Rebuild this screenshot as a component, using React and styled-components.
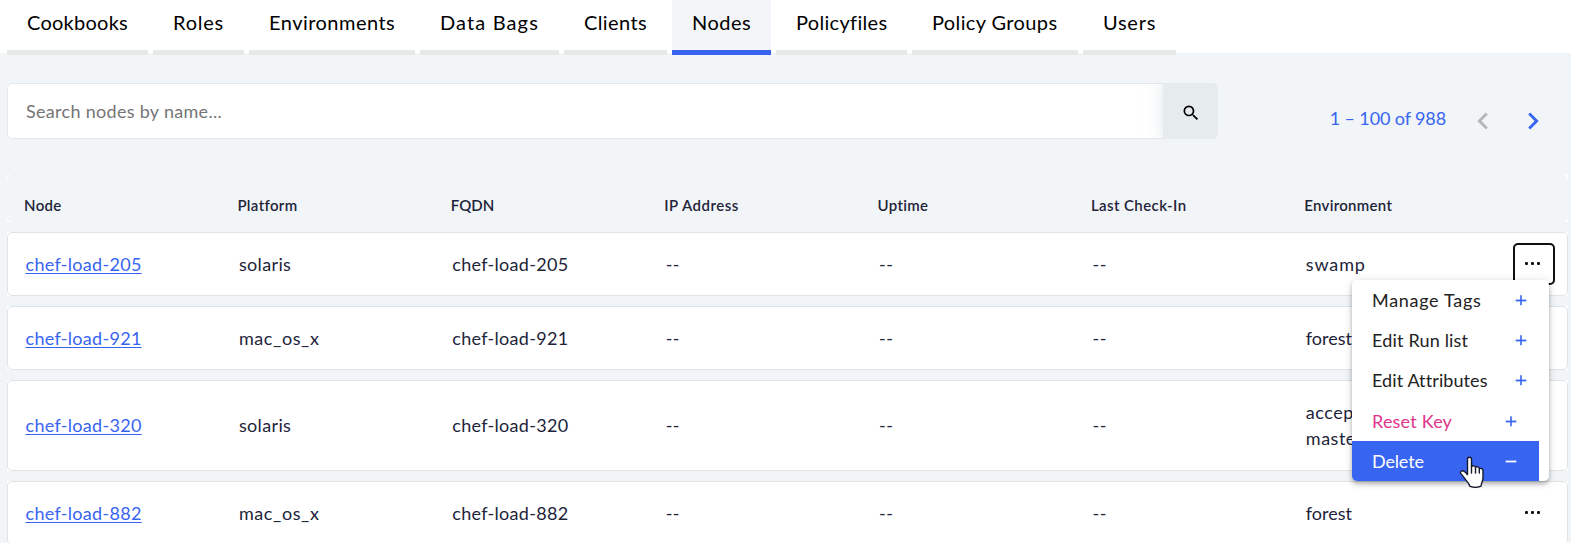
import React from 'react';
import styled, { createGlobalStyle, css } from 'styled-components';
import { MdSearch, MdChevronLeft, MdChevronRight } from 'react-icons/md';

const blue = '#3864f2';

const GlobalStyle = createGlobalStyle`
  *, *::before, *::after { box-sizing: border-box; }
  body {
    margin: 0;
    background: #f2f5f8;
    color: #22243a;
    font: 18px/26px Lato, "Open Sans", sans-serif;
    overflow: hidden;
  }
`;

const Page = styled.div`
  height: 543px;
  overflow: hidden;
`;

const TabBar = styled.nav`
  position: relative;
  display: flex;
  gap: 5px;
  height: 53px;
  padding-left: 7px;
  background: #fff;
`;

const Tab = styled.a`
  flex: none;
  width: ${(p) => p.$width}px;
  height: 55px;
  padding: 10px 0 0 20px;
  border-bottom: 5px solid ${(p) => (p.$active ? blue : '#e6e8e8')};
  background: ${(p) => (p.$active ? '#f4f5f8' : 'transparent')};
  color: #000;
  font-size: 20px;
  line-height: 25px;
  letter-spacing: ${(p) => p.$track}px;
  white-space: nowrap;
`;

const Toolbar = styled.div`
  display: flex;
  align-items: flex-start;
  padding: 30px 21px 0 7px;
`;

const SearchBox = styled.div`
  display: flex;
  width: 1211px;
  height: 56px;
  border-radius: 5px;
  overflow: hidden;
`;

const SearchInput = styled.input`
  flex: 1;
  min-width: 0;
  padding: 0 17px 0 18px;
  border: 1px solid #e4e8ea;
  border-right: 0;
  border-radius: 5px 0 0 5px;
  background: #fff;
  font: inherit;
  letter-spacing: 0.3px;
  outline: 0;
  &::placeholder { color: #757575; opacity: 1; }
`;

const SearchButton = styled.button`
  display: grid;
  place-items: center;
  width: 55px;
  padding: 3px 0 0;
  border: 0;
  background: #e6ebee;
  box-shadow: 0 0 16px rgba(190, 205, 215, 0.5);
  color: #000;
`;

const Pager = styled.div`
  display: flex;
  align-items: center;
  margin: 20.5px 0 0 auto;
  color: ${blue};
`;

const PagerRange = styled.span`
  margin: -5px 20px 0 0;
  letter-spacing: -0.12px;
`;

const PagerArrow = styled.button`
  display: flex;
  padding: 0;
  border: 0;
  background: none;
  color: ${(p) => (p.$off ? '#b4b6b8' : blue)};
  & + & { margin-left: 16px; }
`;

const Table = styled.div`
  display: grid;
  gap: 10px;
  width: 1561px;
  margin: 36px 0 0 7px;
`;

const RowFrame = styled.div`
  background: #fff;
`;

const columns = css`
  display: grid;
  grid-template-columns: repeat(7, 213.4px) minmax(0, 1fr);
  border-radius: 5px;
`;

const HeadRow = styled.div`
  ${columns}
  height: 47px;
  padding: 17px 0 0 17px;
  background: #f2f5f8;
`;

const HeadCell = styled.div`
  font-size: 15px;
  font-weight: 600;
  letter-spacing: ${(p) => p.$track}px;
`;

const Row = styled.div`
  ${columns}
  align-items: center;
  height: ${(p) => (p.$tall ? 90.5 : 64)}px;
  padding-left: 17.5px;
  border: 1px solid #dfe4e7;
`;

const Cell = styled.div`
  letter-spacing: ${(p) => p.$track}px;
  white-space: pre-line;
`;

const NodeLink = styled.a`
  color: ${blue};
  text-decoration: underline;
  text-decoration-thickness: 1px;
  text-underline-offset: 2px;
`;

const Actions = styled.div`
  position: relative;
  justify-self: end;
  width: 42px;
  margin-right: 12px;
`;

const MoreButton = styled.button`
  display: flex;
  align-items: center;
  justify-content: center;
  gap: 3px;
  width: 42px;
  height: 42px;
  padding: 0 3px 1px 0;
  border: 2px solid ${(p) => (p.$focused ? '#101010' : 'transparent')};
  border-radius: 5px;
  background: none;
`;

const Dot = styled.span`
  width: 3px;
  height: 3px;
  border-radius: 1px;
  background: #111;
`;

const Menu = styled.div`
  position: absolute;
  z-index: 2;
  top: 37px;
  right: 6px;
  width: 197px;
  border-radius: 5px;
  overflow: visible;
  background: #fff;
  box-shadow: 0 2px 4px -1px rgba(0, 0, 0, 0.2), 0 4px 5px rgba(0, 0, 0, 0.14), 0 1px 10px rgba(0, 0, 0, 0.12);
`;

const tones = {
  plain: css`color: #222;`,
  danger: css`
    width: 187px;
    height: 41px;
    padding-top: 1px;
    color: #e0358b;
  `,
  active: css`
    width: 187px;
    border-radius: 0 0 0 5px;
    background: ${blue};
    color: #fff;
  `,
};

const MenuItem = styled.div`
  display: flex;
  align-items: center;
  justify-content: space-between;
  height: 40px;
  padding: 0 22px 0 20px;
  letter-spacing: ${(p) => p.$track}px;
  white-space: nowrap;
  ${(p) => tones[p.$tone]}
`;

const Pointer = styled.svg`
  position: absolute;
  left: 107px;
  top: 176px;
`;

const tabs = [
  ['Cookbooks', 141, 0.26], ['Roles', 91, 0.76], ['Environments', 166, 0.47],
  ['Data Bags', 139, 1.13], ['Clients', 103, 0.39], ['Nodes', 99, 0.46],
  ['Policyfiles', 131, 0.31], ['Policy Groups', 166, 0.38], ['Users', 93, 0.74],
];

const heads = [
  ['Node', 0.35], ['Platform', 0.35], ['FQDN', 0], ['IP Address', 0.5],
  ['Uptime', 0.33], ['Last Check-In', 0.4], ['Environment', 0.28],
];

const nodes = [
  { name: 'chef-load-205', platform: ['solaris', 0.35], env: ['swamp', 0.85], open: true },
  { name: 'chef-load-921', platform: ['mac_os_x', 0.6], env: ['forest', 0] },
  { name: 'chef-load-320', platform: ['solaris', 0.35], env: ['accept\nmaster', 0.5], tall: true },
  { name: 'chef-load-882', platform: ['mac_os_x', 0.6], env: ['forest', 0] },
];

const menuItems = [
  ['Manage Tags', 'plain', 0.7], ['Edit Run list', 'plain', 0.18], ['Edit Attributes', 'plain', 0.1],
  ['Reset Key', 'danger', 0.2], ['Delete', 'active', -0.15],
];

function SignIcon({ minus }) {
  return (
    <svg width="12" height="12" viewBox="0 0 12 12" fill="none" stroke={minus ? '#fff' : blue}>
      <path d="M.7 6.5H11.3" strokeWidth="1.8" />
      {!minus && <path d="M6 1.3V11.3" strokeWidth="1.6" />}
    </svg>
  );
}

function HandPointer() {
  return (
    <Pointer width="26" height="32" viewBox="0 0 26 32">
      <path
        d="M8.5 18.6V3.2c0-2.6 4-2.6 4 0v7.2c1-1 3.700-.8 4 .9 1.200-.9 3.500-.5 3.800 1.200 1.700-.5 3.700.2 3.700 2.300v7.200c0 3.400-1.800 4.700-2 8.200-2.600 1.500-8.800 1.500-11.300 0-.5-3-2.400-4.200-4.200-6.600-1.600-2.200-3-4.200-4.600-6-1.500-2 1.200-3.600 3.300-2.200 1.300.8 2.200 1.900 3.300 3.200z"
        fill="#fff" stroke="#16182c" strokeWidth="1.4" strokeLinejoin="round"
      />
      <path d="M12.500 10.500v6.500M16.500 11.500v5.500M20.300 12.800v4.200" stroke="#16182c" strokeWidth="1.4" strokeLinecap="round" />
    </Pointer>
  );
}

function NodeRow({ node }) {
  return (
    <RowFrame>
      <Row $tall={node.tall}>
        <Cell $track={0.3}><NodeLink>{node.name}</NodeLink></Cell>
        <Cell $track={node.platform[1]}>{node.platform[0]}</Cell>
        <Cell $track={0.3}>{node.name}</Cell>
        <Cell $track={0.5}>--</Cell>
        <Cell $track={0.5}>--</Cell>
        <Cell $track={0.5}>--</Cell>
        <Cell $track={node.env[1]}>{node.env[0]}</Cell>
        <Actions>
          <MoreButton $focused={node.open}><Dot /><Dot /><Dot /></MoreButton>
          {node.open && (
            <Menu>
              {menuItems.map(([label, tone, track]) => (
                <MenuItem key={label} $tone={tone} $track={track}>
                  {label}
                  <SignIcon minus={tone === 'active'} />
                </MenuItem>
              ))}
              <HandPointer />
            </Menu>
          )}
        </Actions>
      </Row>
    </RowFrame>
  );
}

export default function App() {
  return (
    <Page>
      <GlobalStyle />
      <TabBar>
        {tabs.map(([label, width, track]) => (
          <Tab key={label} $width={width} $track={track} $active={label === 'Nodes'}>{label}</Tab>
        ))}
      </TabBar>
      <Toolbar>
        <SearchBox>
          <SearchInput placeholder="Search nodes by name..." />
          <SearchButton><MdSearch size={20} /></SearchButton>
        </SearchBox>
        <Pager>
          <PagerRange>1 – 100 of 988</PagerRange>
          <PagerArrow $off><MdChevronLeft size={34} /></PagerArrow>
          <PagerArrow><MdChevronRight size={34} /></PagerArrow>
        </Pager>
      </Toolbar>
      <Table>
        <RowFrame>
          <HeadRow>
            {heads.map(([label, track]) => <HeadCell key={label} $track={track}>{label}</HeadCell>)}
          </HeadRow>
        </RowFrame>
        {nodes.map((node) => <NodeRow key={node.name} node={node} />)}
      </Table>
    </Page>
  );
}
